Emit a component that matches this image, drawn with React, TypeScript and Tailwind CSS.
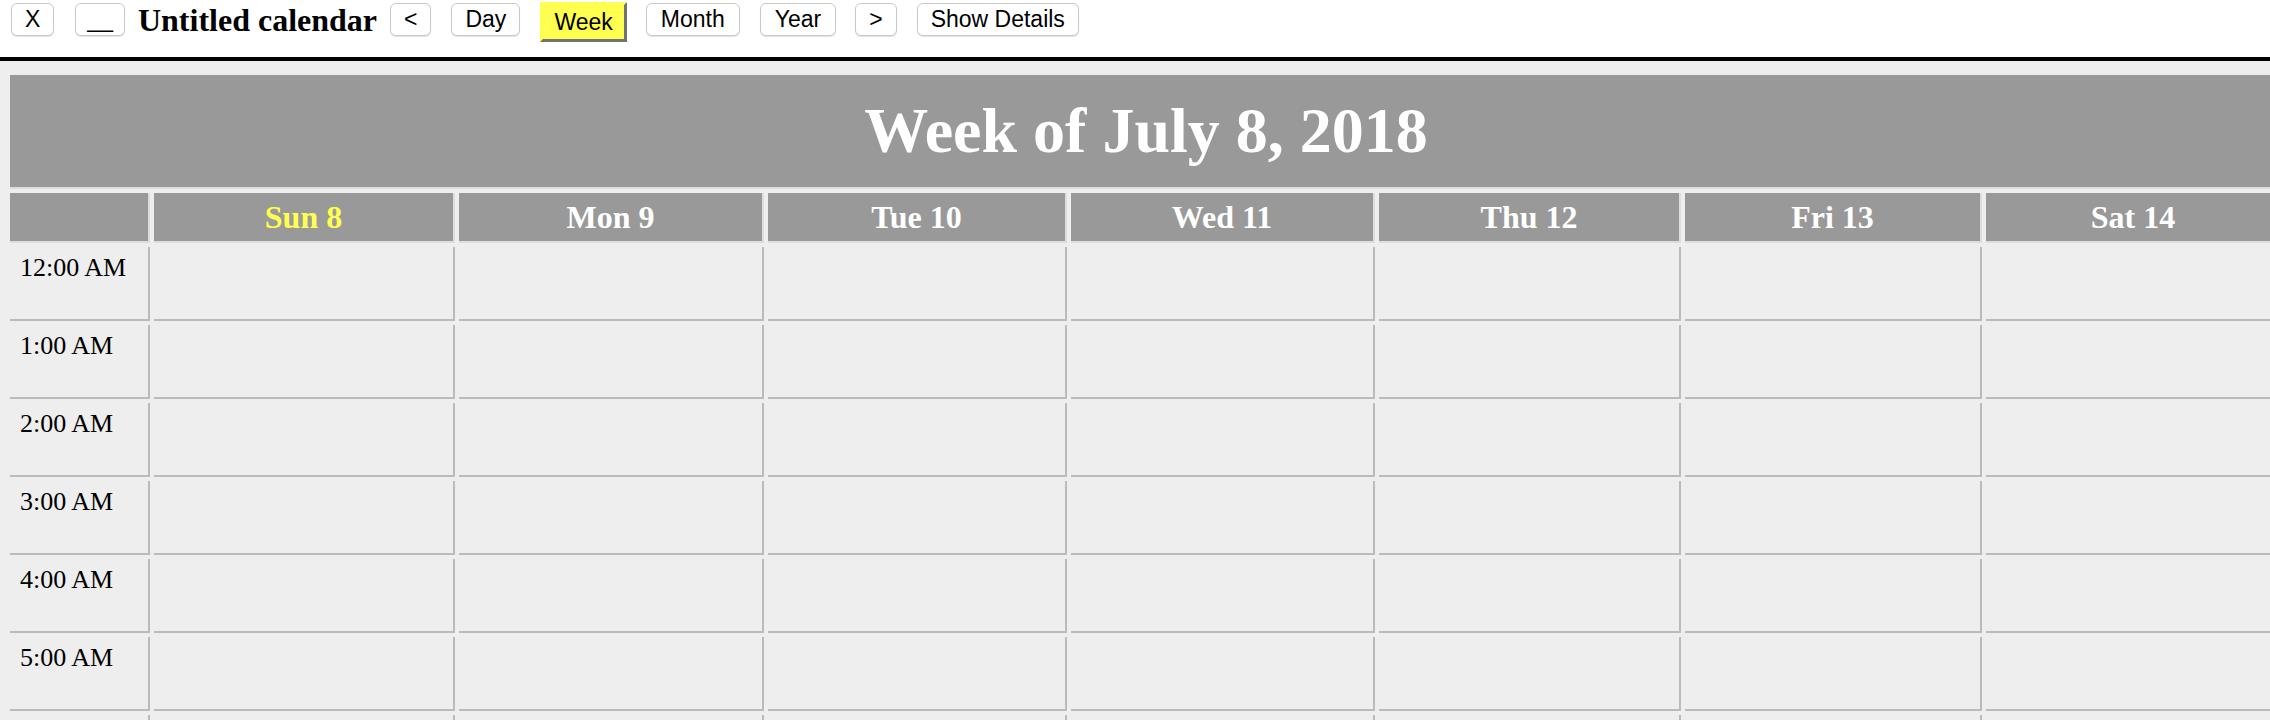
import React from "react";

const days = ["Sun 8", "Mon 9", "Tue 10", "Wed 11", "Thu 12", "Fri 13", "Sat 14"];

const hours = Array.from({ length: 24 }, (_, i) => {
  const h = i % 12 === 0 ? 12 : i % 12;
  return `${h}:00 ${i < 12 ? "AM" : "PM"}`;
});

function Btn({ label, className = "" }: { label: string; className?: string }) {
  return (
    <button
      className={`flex h-[33px] items-center rounded-[6px] border border-[#c9c9c9] bg-white text-[23px] text-black shadow-[0_1px_1px_rgba(0,0,0,0.12)] ${className}`}
      style={{ fontFamily: '"Liberation Sans", Arial, sans-serif' }}
    >
      {label}
    </button>
  );
}

export default function App() {
  return (
    <div
      className="h-[720px] w-[2270px] overflow-hidden bg-[#eeeeee]"
      style={{ fontFamily: '"Liberation Serif", "Times New Roman", serif' }}
    >
      {/* toolbar */}
      <div className="flex h-[61px] items-start border-b-4 border-black bg-white pt-[3px]">
        <Btn label="X" className="ml-[11px] px-[13px]" />
        <Btn label="__" className="ml-[21px] px-[11px]" />
        <h1 className="ml-[13px] mt-[-1px] text-[32px] font-bold leading-[37px] text-black">
          Untitled calendar
        </h1>
        <Btn label="<" className="ml-[13px] px-[13px]" />
        <Btn label="Day" className="ml-[20px] px-[13px]" />
        <button
          className="ml-[20px] mt-[-1px] flex h-[40px] items-center border-[3px] border-t-[#ffff4f] border-l-[#ffff4f] border-b-[#727272] border-r-[#727272] bg-[#ffff4f] px-[11px] text-[23px] text-black"
          style={{ fontFamily: '"Liberation Sans", Arial, sans-serif' }}
        >
          Week
        </button>
        <Btn label="Month" className="ml-[19px] px-[14px]" />
        <Btn label="Year" className="ml-[20px] px-[14px]" />
        <Btn label=">" className="ml-[19px] px-[13px]" />
        <Btn label="Show Details" className="ml-[20px] px-[13px]" />
      </div>

      {/* week grid */}
      <div className="pl-[10px] pt-[14px]">
        <div className="grid w-max grid-cols-[140px_301px_305px_299px_304px_302px_297px_296px] gap-[4px]">
          <div className="col-span-8 flex h-[114px] items-center justify-center border-b-2 border-[#dddddd] bg-[#999999] text-[64px] font-bold text-white">
            Week of July 8, 2018
          </div>

          <div className="h-[50px] border-b-2 border-r-2 border-[#dddddd] bg-[#999999]" />
          {days.map((d, i) => (
            <div
              key={d}
              className={`flex h-[50px] items-center justify-center border-b-2 border-r-2 border-[#dddddd] bg-[#999999] text-[32px] font-bold ${i === 0 ? "text-[#ffff4f]" : "text-white"}`}
            >
              {d}
            </div>
          ))}

          {hours.map((h) => (
            <React.Fragment key={h}>
              <div className="h-[74px] border-b-2 border-r-2 border-[#bbbbbb] bg-[#eeeeee] pl-[10px] pt-[6px] text-[26px] leading-[30px] text-black">
                {h}
              </div>
              {days.map((d) => (
                <div key={d} className="h-[74px] border-b-2 border-r-2 border-[#bbbbbb] bg-[#eeeeee]" />
              ))}
            </React.Fragment>
          ))}
        </div>
      </div>
    </div>
  );
}
